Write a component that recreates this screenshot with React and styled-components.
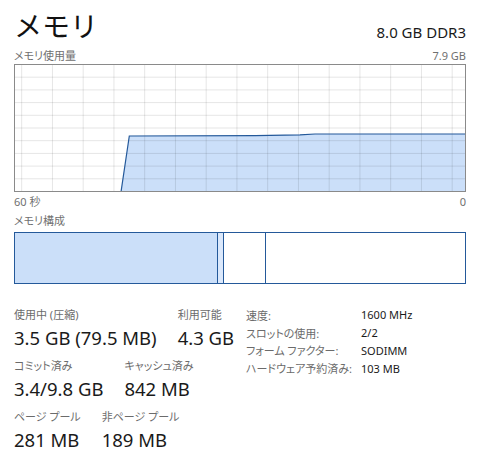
import React from 'react';
import styled, { createGlobalStyle } from 'styled-components';

const GlobalStyle = createGlobalStyle`
  body {
    margin: 0;
    background: #ffffff;
    font-family: "Noto Sans", "Noto Sans CJK JP", sans-serif;
    color: #1a1a1a;
  }
`;

const Page = styled.div`
  width: 486px;
  height: 470px;
  box-sizing: border-box;
  padding: 6px 20px 0 14px;
  overflow: hidden;
`;

const Header = styled.div`
  display: flex;
  justify-content: space-between;
  align-items: flex-end;
  height: 36px;
`;

const Title = styled.div`
  font-size: 28px;
  line-height: 32px;
  font-weight: 400;
  color: #111111;
`;

const Spec = styled.div`
  font-size: 15px;
  line-height: 20px;
  color: #1a1a1a;
`;

const LabelRow = styled.div`
  display: flex;
  justify-content: space-between;
  font-size: 11px;
  line-height: 16px;
  color: #707070;
  font-feature-settings: "palt";
  margin-top: ${props => props.top || 0}px;
`;

const Chart = styled.div`
  width: 452px;
  height: 128px;
  box-sizing: border-box;
  border: 1px solid #8a8a8a;
  svg {
    display: block;
  }
`;

const Composition = styled.div`
  display: flex;
  width: 452px;
  height: 52px;
  box-sizing: border-box;
  border: 1px solid #24599a;
  margin-top: 3px;
`;

const Segment = styled.div`
  width: ${props => props.width}px;
  flex: ${props => (props.grow ? 1 : 'none')};
  background: ${props => props.fill || '#ffffff'};
  border-right: ${props => (props.last ? 'none' : '1px solid #24599a')};
`;

const Stats = styled.div`
  display: flex;
  margin-top: 23px;
`;

const StatsLeft = styled.div`
  width: 232px;
  display: flex;
  flex-direction: column;
  gap: 5px;
`;

const StatRow = styled.div`
  display: flex;
  gap: 21px;
`;

const Stat = styled.div`
  display: flex;
  flex-direction: column;
`;

const StatLabel = styled.div`
  font-size: 11px;
  line-height: 16px;
  color: #6b6b6b;
  font-feature-settings: "palt";
`;

const StatValue = styled.div`
  font-size: 18.5px;
  line-height: 30px;
  color: #1a1a1a;
  white-space: nowrap;
`;

const Details = styled.div`
  display: grid;
  grid-template-columns: 115px auto;
  grid-auto-rows: 17.8px;
  font-size: 11px;
  align-items: center;
  margin-top: -1px;
`;

const DetailLabel = styled.div`
  color: #6b6b6b;
  white-space: nowrap;
  font-feature-settings: "palt";
`;

const DetailValue = styled.div`
  color: #1a1a1a;
`;

const areaPoints = '106,127 114.3,71 240,70.6 285,69.8 300,69 451,69 451,127';
const linePoints = '106,127 114.3,71 240,70.6 285,69.8 300,69 451,69';

const UsageGraph = () => {
  const vLines = [];
  for (let x = 6.7; x < 450; x += 30.75) vLines.push(x);
  const hLines = [];
  for (let i = 1; i < 10; i++) hLines.push(i * 12.7 - 0.5);
  return (
    <svg width="450" height="126" viewBox="0 0 450 126">
      <polygon points={areaPoints} fill="#cbdff9" />
      {vLines.map(x => (
        <line key={'v' + x} x1={x} y1="0" x2={x} y2="126" stroke="rgba(0,0,0,0.1)" strokeWidth="1" />
      ))}
      {hLines.map(y => (
        <line key={'h' + y} x1="0" y1={y} x2="450" y2={y} stroke="rgba(0,0,0,0.1)" strokeWidth="1" />
      ))}
      <polyline points={linePoints} fill="none" stroke="#24599a" strokeWidth="1.2" />
    </svg>
  );
};

const stats = [
  [['使用中 (圧縮)', '3.5 GB (79.5 MB)'], ['利用可能', '4.3 GB']],
  [['コミット済み', '3.4/9.8 GB'], ['キャッシュ済み', '842 MB']],
  [['ページ プール', '281 MB'], ['非ページ プール', '189 MB']],
];

const details = [
  ['速度:', '1600 MHz'],
  ['スロットの使用:', '2/2'],
  ['フォーム ファクター:', 'SODIMM'],
  ['ハードウェア予約済み:', '103 MB'],
];

const App = () => {
  return (
    <Page>
      <GlobalStyle />
      <Header>
        <Title>メモリ</Title>
        <Spec>8.0 GB DDR3</Spec>
      </Header>

      <LabelRow top={6}>
        <span>メモリ使用量</span>
        <span>7.9 GB</span>
      </LabelRow>
      <Chart>
        <UsageGraph />
      </Chart>
      <LabelRow top={2}>
        <span>60 秒</span>
        <span>0</span>
      </LabelRow>

      <LabelRow top={3}>
        <span>メモリ構成</span>
      </LabelRow>
      <Composition>
        <Segment width={202} fill="#cbdff9" />
        <Segment width={5} fill="#dbe8fb" />
        <Segment width={41} />
        <Segment grow last />
      </Composition>

      <Stats>
        <StatsLeft>
          {stats.map((row, i) => (
            <StatRow key={i}>
              {row.map(([label, value]) => (
                <Stat key={label}>
                  <StatLabel>{label}</StatLabel>
                  <StatValue>{value}</StatValue>
                </Stat>
              ))}
            </StatRow>
          ))}
        </StatsLeft>
        <Details>
          {details.map(([label, value]) => (
            <React.Fragment key={label}>
              <DetailLabel>{label}</DetailLabel>
              <DetailValue>{value}</DetailValue>
            </React.Fragment>
          ))}
        </Details>
      </Stats>
    </Page>
  );
};

export default App;
